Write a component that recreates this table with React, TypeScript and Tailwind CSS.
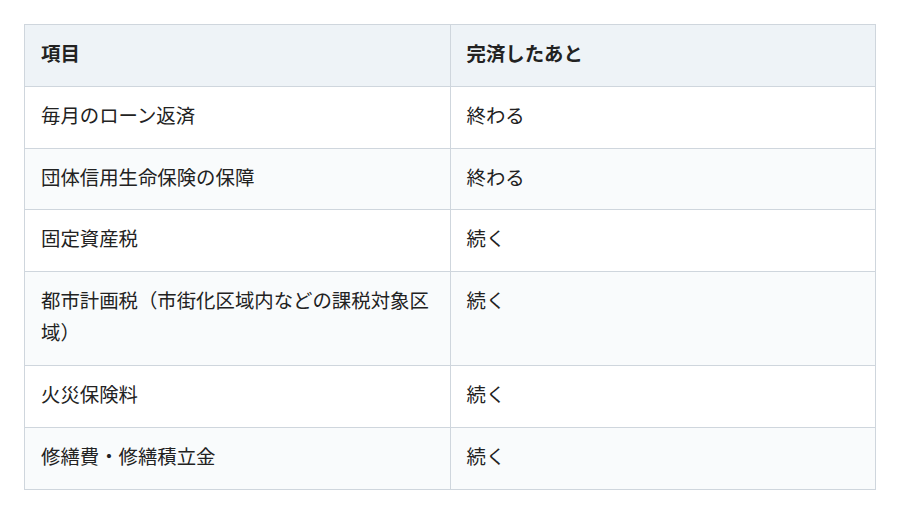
const rows: [string, string][] = [
  ['毎月のローン返済', '終わる'],
  ['団体信用生命保険の保障', '終わる'],
  ['固定資産税', '続く'],
  ['都市計画税（市街化区域内などの課税対象区域）', '続く'],
  ['火災保険料', '続く'],
  ['修繕費・修繕積立金', '続く'],
]

export default function App() {
  return (
    <div className="bg-white p-6 font-['Noto_Sans_CJK_JP','Noto_Sans',sans-serif] text-[#222]">
      <table className="w-full table-fixed border-collapse border border-[#cfd6dd] text-[19.4px] leading-[32px]">
        <thead>
          <tr className="bg-[#eef3f7]">
            <th className="border border-[#cfd6dd] px-4 pt-[12px] pb-[16.8px] text-left font-bold">項目</th>
            <th className="border border-[#cfd6dd] px-4 pt-[12px] pb-[16.8px] text-left font-bold">完済したあと</th>
          </tr>
        </thead>
        <tbody>
          {rows.map(([item, after], i) => (
            <tr key={i} className={i % 2 === 1 ? 'bg-[#f9fbfc]' : 'bg-white'}>
              <td className="border border-[#cfd6dd] px-4 pt-[12px] pb-[16.8px] align-top">{item}</td>
              <td className="border border-[#cfd6dd] px-4 pt-[12px] pb-[16.8px] align-top">{after}</td>
            </tr>
          ))}
        </tbody>
      </table>
    </div>
  )
}
